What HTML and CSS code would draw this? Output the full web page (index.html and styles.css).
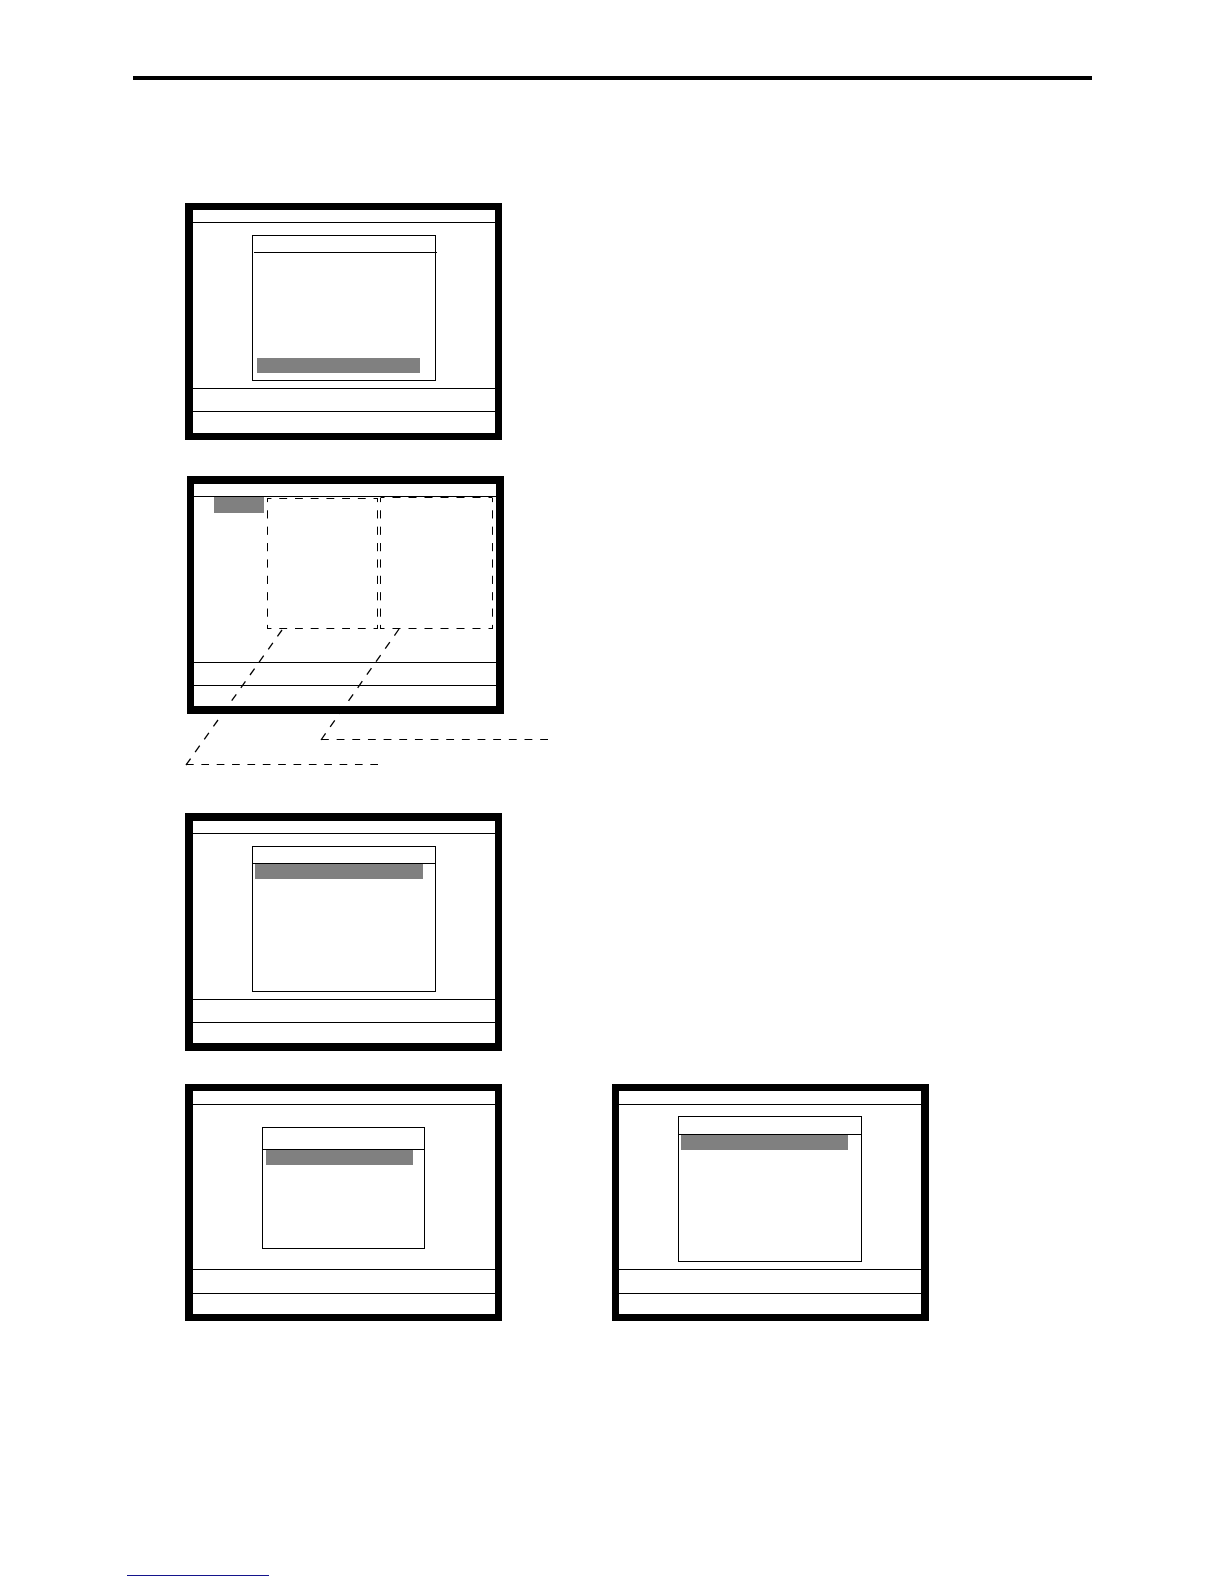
FILE: index.html
```
<!DOCTYPE html>
<html lang="en">

<head>
  <meta charset="utf-8">
  <meta content="width=device-width, initial-scale=1" name="viewport">
  <link rel="stylesheet" href="styles.css">
</head>

<body>
  <header class="page-header"></header>

  <main class="content">
    <!-- Menu, last item selected -->
    <div class="screen">
      <div class="screen-title"></div>
      <div class="screen-body">
        <div class="menu menu-last">
          <div class="menu-title"></div>
          <div class="menu-list">
            <div class="selected"></div>
          </div>
        </div>
      </div>
      <div class="screen-status"></div>
      <div class="screen-keys"></div>
    </div>

    <!-- Two columns of fields with leader lines -->
    <figure class="callout">
      <div class="screen screen-fields">
        <div class="screen-title"></div>
        <div class="screen-body">
          <div class="selected"></div>
        </div>
        <div class="screen-status"></div>
        <div class="screen-keys"></div>
      </div>
      <svg class="leaders" width="364" height="290" viewBox="0 0 364 290" aria-hidden="true">
        <!-- left column -->
        <g stroke-dashoffset="4">
          <path d="M82.5 22.5H192.5" pathLength="112" />
          <path d="M82.5 152.5H192.5" pathLength="112" />
          <path d="M82.5 22V153" pathLength="128" />
          <path d="M192.5 22V153" pathLength="128" />
        </g>
        <!-- right column -->
        <g stroke-dashoffset="4">
          <path d="M195.5 21.5H307.5" pathLength="112" />
          <path d="M195.5 152.5H307.5" pathLength="112" />
          <path d="M195.5 22V153" pathLength="128" />
          <path d="M307.5 22V153" pathLength="128" />
        </g>
        <!-- leaders -->
        <path class="slant" d="M97 154L1 289" pathLength="168" />
        <path d="M1 288.5H193" pathLength="200" />
        <path class="slant" d="M214 153L136 264" pathLength="136" />
        <path d="M136 263.5H363" pathLength="232" />
      </svg>
    </figure>

    <!-- Menu, first item selected -->
    <div class="screen screen-tall">
      <div class="screen-title"></div>
      <div class="screen-body">
        <div class="menu">
          <div class="menu-title"></div>
          <div class="menu-list">
            <div class="selected"></div>
          </div>
        </div>
      </div>
      <div class="screen-status"></div>
      <div class="screen-keys"></div>
    </div>

    <div class="screen-row">
      <div class="screen screen-sub">
        <div class="screen-title"></div>
        <div class="screen-body">
          <div class="menu menu-small">
            <div class="menu-title"></div>
            <div class="menu-list">
              <div class="selected"></div>
            </div>
          </div>
        </div>
        <div class="screen-status"></div>
        <div class="screen-keys"></div>
      </div>

      <div class="screen screen-sub">
        <div class="screen-title"></div>
        <div class="screen-body">
          <div class="menu">
            <div class="menu-title"></div>
            <div class="menu-list">
              <div class="selected"></div>
            </div>
          </div>
        </div>
        <div class="screen-status"></div>
        <div class="screen-keys"></div>
      </div>
    </div>
  </main>

  <footer class="page-footer">
    <div class="footer-rule"></div>
  </footer>
</body>

</html>
```

FILE: styles.css
```
:root {
  --ink: #000000;
  --paper: #ffffff;
  --highlight: #808080;
  --footer-color: #14148c;
}

* {
  box-sizing: border-box;
}

body {
  font-family: "Liberation Sans", Arial, sans-serif;
  background-color: var(--paper);
  color: var(--ink);
  margin: 0;
  padding: 76px 0 8px;
  min-height: 100vh;
  display: flex;
  flex-direction: column;
}

.page-header {
  margin: 0 132px 0 133px;
  border-top: 4px solid var(--ink);
}

.content {
  padding: 123px 132px 0 185px;
}

/* Terminal screens */
.screen {
  display: flex;
  flex-direction: column;
  width: 317px;
  border: 7px solid var(--ink);
  border-left-width: 8px;
}

.screen-title {
  height: 13px;
  border-bottom: 1px solid var(--ink);
}

.screen-body {
  display: flex;
  justify-content: center;
  align-items: flex-start;
  height: 165px;
  padding-top: 12px;
}

.screen-status {
  height: 23px;
  border-top: 1px solid var(--ink);
}

.screen-keys {
  height: 22px;
  border-top: 1px solid var(--ink);
}

.screen-tall {
  border-width: 8px 7px 8px 8px;
}

.screen-fields {
  margin-left: 2px;
  border-width: 8px 8px 8px 7px;
}

.screen-tall .screen-keys,
.screen-fields .screen-keys,
.screen-sub .screen-keys {
  height: 21px;
}

.screen-fields .screen-body {
  justify-content: flex-start;
  padding: 0 20px;
}

.screen-fields .selected {
  width: 50px;
  height: 16px;
}

.screen-sub .screen-title {
  height: 14px;
}

.screen-sub .screen-body {
  height: 164px;
  padding-top: 11px;
}

.screen-sub .screen-status {
  height: 24px;
}

.screen-sub + .screen-sub {
  border-width: 7px 8px 7px 7px;
}

.screen-row {
  display: flex;
  gap: 110px;
  margin-top: 33px;
}

/* Menu windows */
.menu {
  display: flex;
  flex-direction: column;
  width: 184px;
  height: 146px;
  border: 1px solid var(--ink);
}

.menu-title {
  height: 17px;
  border-bottom: 1px solid var(--ink);
}

.menu-list {
  flex: 1;
  display: flex;
  flex-direction: column;
  padding: 0 12px 7px 2px;
}

.selected {
  height: 15px;
  background-color: var(--highlight);
}

.menu-last .menu-title {
  margin: 0 -2px 0 1px;
}

.menu-last .menu-list {
  justify-content: flex-end;
  padding: 0 15px 7px 4px;
}

.screen-sub .menu-title {
  height: 18px;
}

.screen-sub .menu-list {
  padding-right: 13px;
}

.screen-sub .menu-small {
  width: 163px;
  height: 122px;
  margin: 11px 1px 0 0;
}

.screen-sub .menu-small .menu-title {
  height: 22px;
}

.screen-sub .menu-small .menu-list {
  padding: 0 11px 7px 3px;
}

/* Dashed outlines and leader lines */
.callout {
  position: relative;
  margin: 36px 0 47px;
  padding-bottom: 52px;
}

.leaders {
  position: absolute;
  top: 0;
  left: 0;
  fill: none;
  stroke: var(--ink);
  stroke-width: 1;
  stroke-dasharray: 8 8;
}

.leaders .slant {
  stroke-width: 1.3;
}

.page-footer {
  margin-top: auto;
  padding: 0 127px;
}

.footer-rule {
  width: 142px;
  border-bottom: 1px solid var(--footer-color);
}
```
